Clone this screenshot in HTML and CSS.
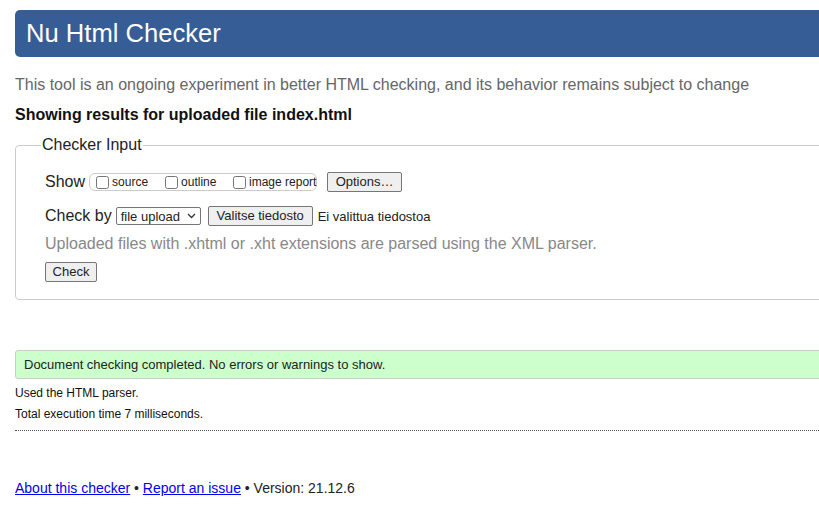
FILE: index.html
```html
<!DOCTYPE html>
<html lang="en">
<head>
<meta charset="utf-8">
<title>Nu Html Checker</title>
<link rel="stylesheet" href="styles.css">
</head>
<body>
<div class="page">
  <h1 class="title">Nu Html Checker</h1>
  <p class="intro">This tool is an ongoing experiment in better HTML checking, and its behavior remains subject to change</p>
  <h2 class="results">Showing results for uploaded file index.html</h2>
  <form class="form">
    <fieldset class="checker">
      <legend class="legend">Checker Input</legend>
      <div class="row show-row">
        <span class="label">Show</span>
        <span class="opts">
          <label class="opt"><input type="checkbox" class="cb"><span>source</span></label>
          <label class="opt"><input type="checkbox" class="cb"><span>outline</span></label>
          <label class="opt"><input type="checkbox" class="cb"><span>image report</span></label>
        </span>
        <button type="button" class="btn btn-options">Options…</button>
      </div>
      <div class="row by-row">
        <span class="label">Check by</span>
        <span class="select">file upload <svg class="chev" width="9" height="6" viewBox="0 0 9 6"><path d="M1 1l3.5 3.5L8 1" fill="none" stroke="#333" stroke-width="1.3"/></svg></span>
        <button type="button" class="btn btn-file">Valitse tiedosto</button>
        <span class="nofile">Ei valittua tiedostoa</span>
      </div>
      <p class="note">Uploaded files with .xhtml or .xht extensions are parsed using the XML parser.</p>
      <div class="row submit-row">
        <button type="button" class="btn btn-check">Check</button>
      </div>
    </fieldset>
  </form>
  <p class="success">Document checking completed. No errors or warnings to show.</p>
  <p class="details">Used the HTML parser.</p>
  <p class="details">Total execution time 7 milliseconds.</p>
  <hr class="sep">
  <p class="footer"><a href="#">About this checker</a> • <a href="#">Report an issue</a> • Version: 21.12.6</p>
</div>
</body>
</html>
```
FILE: styles.css
```css
html, body {
  overflow: hidden;
}
body {
  margin: 0;
  padding: 10px 0 0 15px;
  font-family: "Liberation Sans", Arial, sans-serif;
  color: #222;
  background: #fff;
}
.page {
  width: 830px;
}
.title {
  margin: 0;
  height: 47px;
  line-height: 46px;
  padding-left: 11px;
  font-size: 25.6px;
  font-weight: normal;
  color: #fff;
  background: #365d95;
  border-radius: 5px 0 0 5px;
}
.intro {
  margin: 18px 0 0;
  font-size: 16px;
  line-height: 20px;
  color: #666;
}
.results {
  margin: 10px 0 0;
  font-size: 16px;
  line-height: 20px;
  font-weight: bold;
  color: #111;
}
.form {
  margin: 10px 0 0;
}
.checker {
  margin: 0;
  padding: 0 20px 17px 25px;
  border: 1px solid #ccc;
  border-radius: 4px;
}
.legend {
  padding: 0 1px;
  font-size: 16px;
  line-height: 20px;
  color: #222;
}
.row {
  display: flex;
  align-items: center;
  margin-left: 4px;
}
.label {
  font-size: 16px;
  color: #222;
}
.show-row {
  margin-top: 16px;
  height: 22px;
}
.opts {
  display: flex;
  align-items: center;
  flex-shrink: 0;
  height: 16px;
  margin-left: 4px;
  padding: 0 6px 0 6px;
  border: 1px solid #ccc;
  border-radius: 6px;
  width: 214px;
}
.opt {
  display: flex;
  align-items: center;
  flex-shrink: 0;
  white-space: nowrap;
  font-size: 12px;
  color: #222;
}
.opt:nth-child(1) { width: 69px; }
.opt:nth-child(2) { width: 68px; }
.cb {
  margin: 0 3px 0 0;
  width: 13px;
  height: 13px;
}
.btn {
  font-family: "Liberation Sans", Arial, sans-serif;
  font-size: 13px;
  color: #222;
  background: #efefef;
  border: 1px solid #767676;
  border-radius: 2px;
  height: 20px;
  padding: 0 6px;
  line-height: 18px;
  flex-shrink: 0;
}
.btn-options {
  margin-left: 10px;
  width: 75px;
}
.by-row {
  margin-top: 12px;
  height: 22px;
}
.select {
  display: flex;
  align-items: center;
  justify-content: space-between;
  margin-left: 4px;
  width: 85px;
  height: 18px;
  box-sizing: border-box;
  padding: 0 4px;
  border: 1px solid #767676;
  border-radius: 2px;
  font-size: 13px;
  color: #222;
}
.chev {
  display: block;
}
.btn-file {
  margin-left: 7px;
  width: 105px;
}
.nofile {
  margin-left: 5px;
  font-size: 13px;
  color: #222;
}
.note {
  margin: 7px 0 0 4px;
  font-size: 16px;
  line-height: 20px;
  color: #888;
}
.submit-row {
  margin-top: 8px;
}
.btn-check {
  width: 52px;
}
.success {
  margin: 50px 0 0;
  height: 29px;
  box-sizing: border-box;
  padding-left: 8px;
  line-height: 27px;
  font-size: 13px;
  color: #222;
  background: #ccffcc;
  border: 1px solid #ccc;
  border-radius: 3px 0 0 3px;
}
.details {
  margin: 7px 0 0;
  font-size: 12px;
  line-height: 14px;
  color: #111;
}
.details + .details {
  margin-top: 7px;
}
.sep {
  margin: 9px 0 0;
  border: 0;
  border-top: 1px dotted #555;
  height: 0;
}
.footer {
  margin: 49px 0 0;
  font-size: 14px;
  line-height: 16px;
  color: #222;
}
.footer a {
  color: #00e;
  text-decoration: underline;
}
```
